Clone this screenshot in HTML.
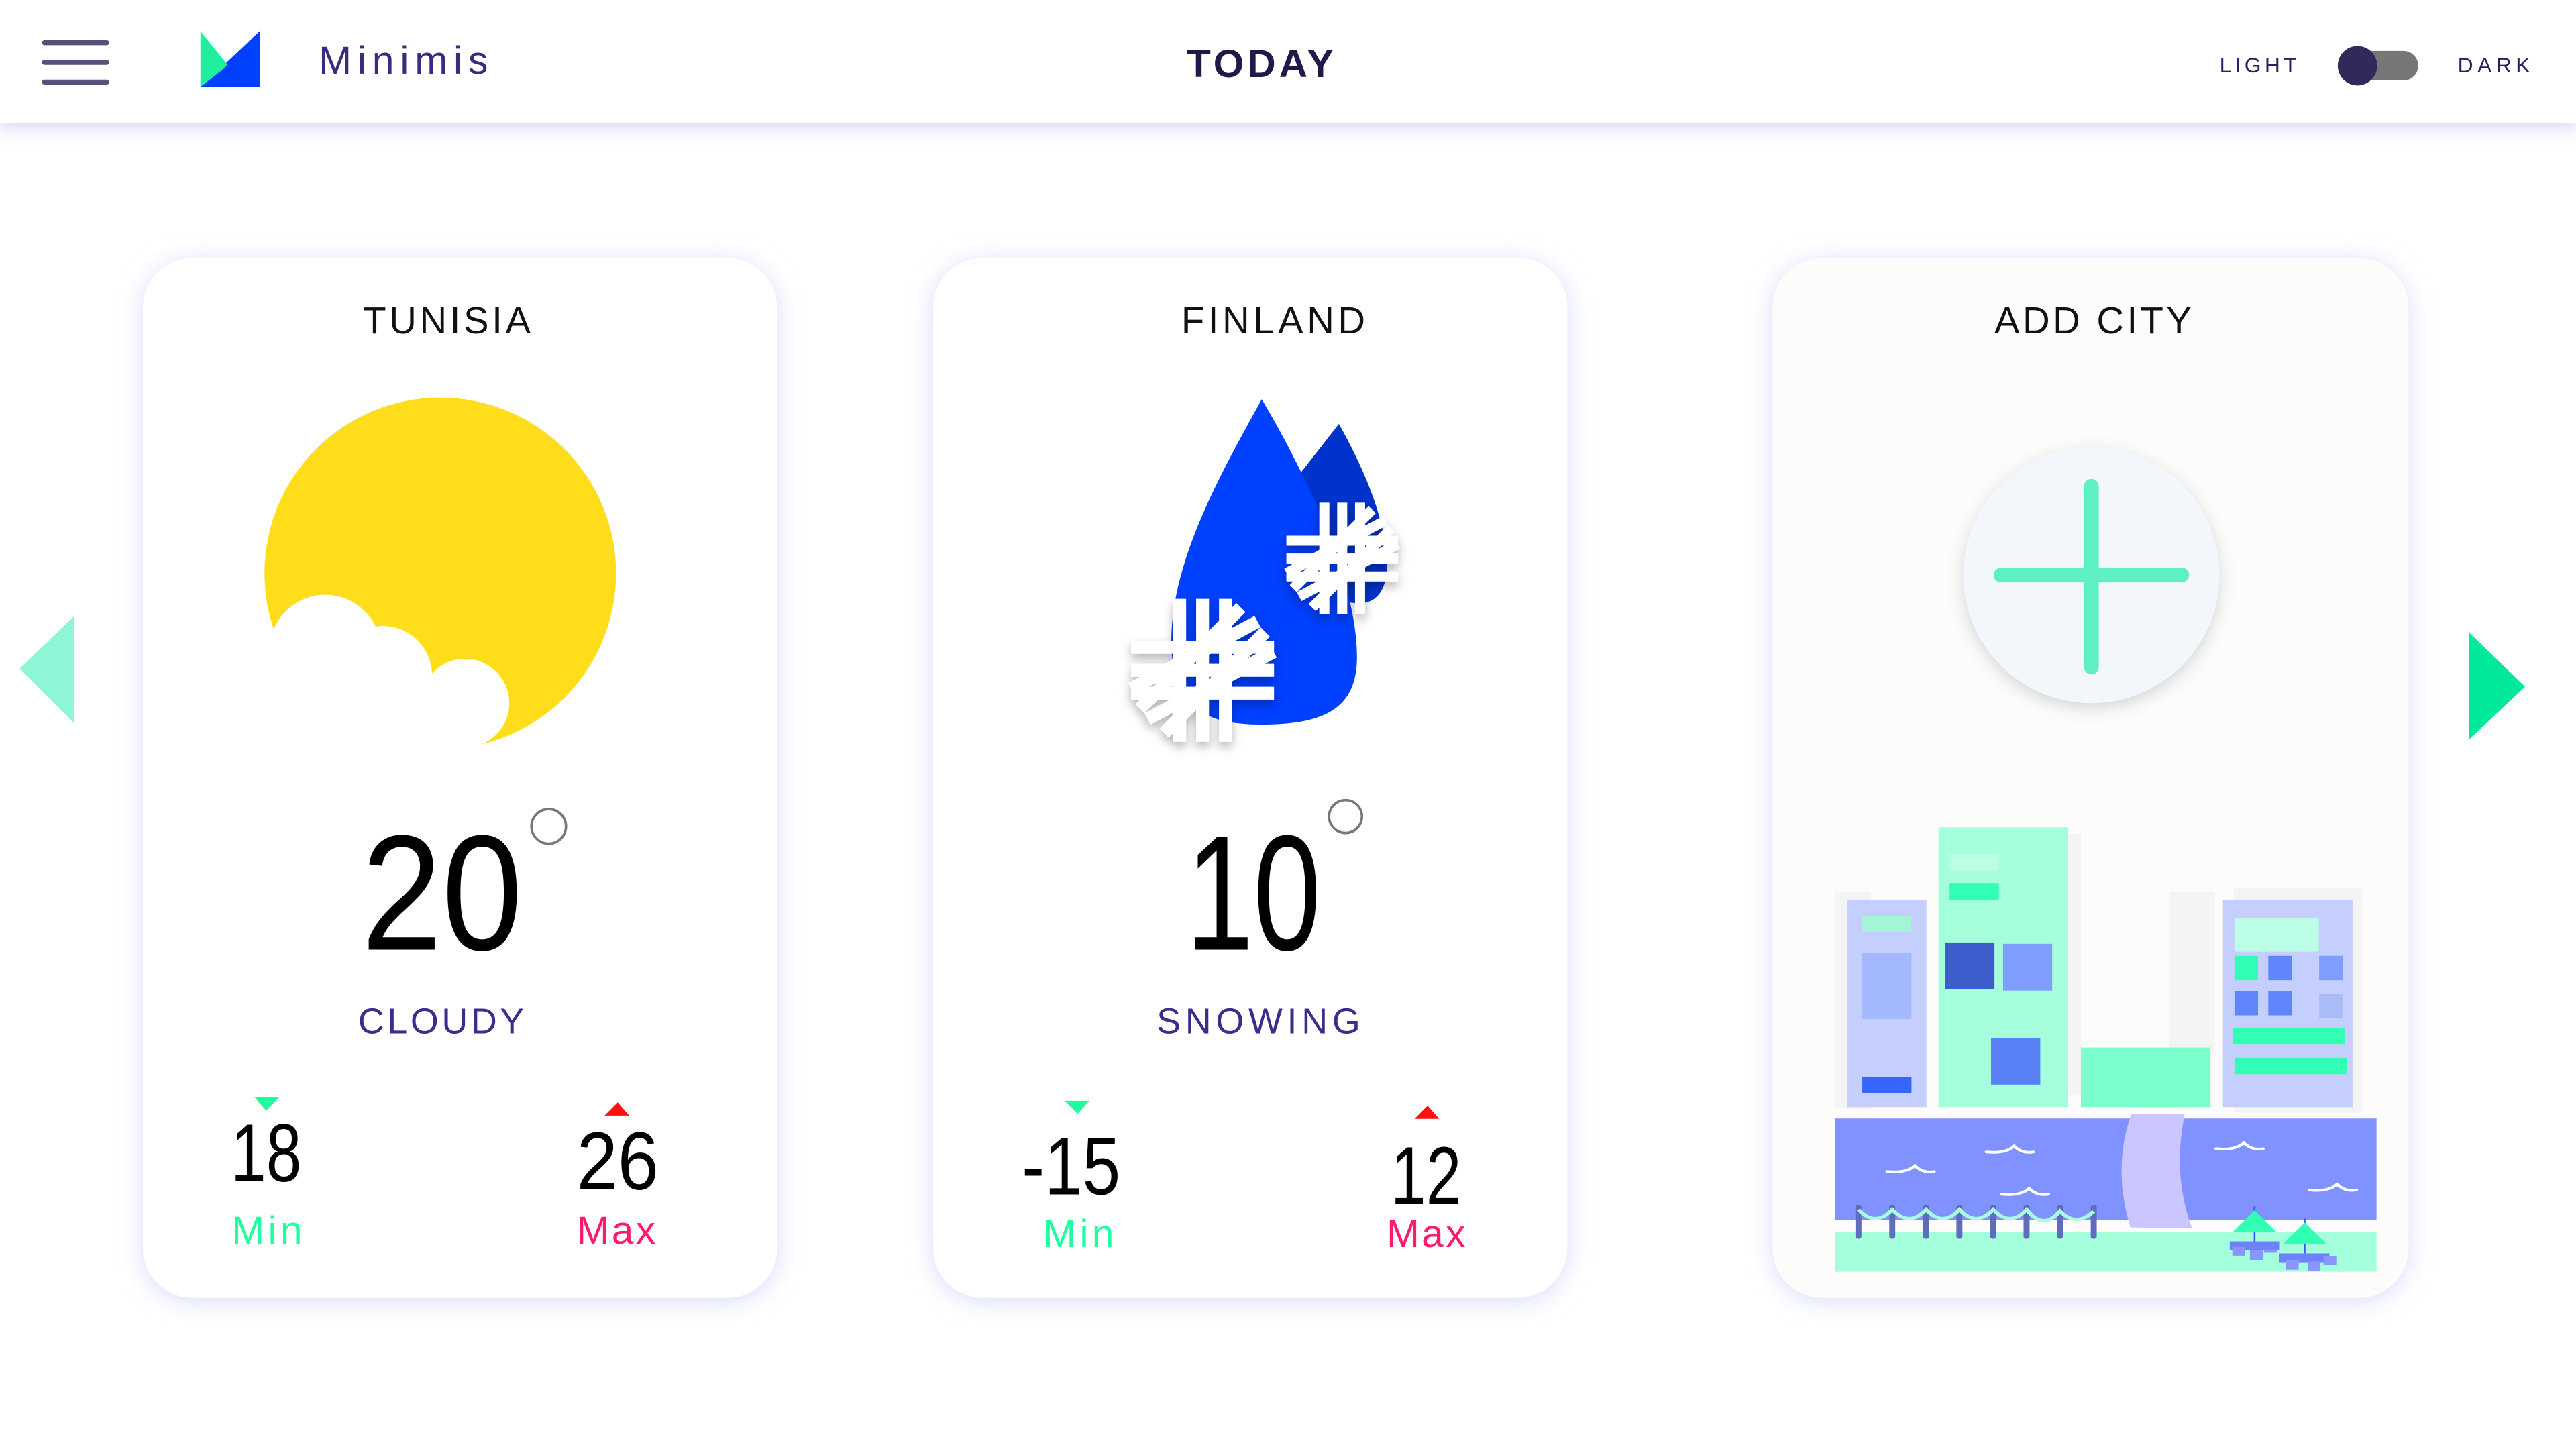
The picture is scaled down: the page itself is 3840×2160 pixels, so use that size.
<!DOCTYPE html>
<html><head><meta charset="utf-8"><style>
html,body{margin:0;padding:0;background:#fff;width:3840px;height:2160px;overflow:hidden}
svg{display:block}
text{font-family:"Liberation Sans",sans-serif}
</style></head><body>
<svg width="3840" height="2160" viewBox="0 0 1568 882" xmlns="http://www.w3.org/2000/svg">
<defs>
<filter id="hs" x="-5%" y="-50%" width="110%" height="200%"><feDropShadow dx="0" dy="3" stdDeviation="5" flood-color="#c8ccf5" flood-opacity="0.8"/></filter>
<filter id="cs" x="-20%" y="-20%" width="140%" height="140%"><feDropShadow dx="0" dy="2" stdDeviation="7" flood-color="#c9cdfa" flood-opacity="0.7"/></filter>
<filter id="ps" x="-30%" y="-30%" width="160%" height="160%"><feDropShadow dx="0" dy="3" stdDeviation="5" flood-color="#9aa" flood-opacity="0.45"/></filter>
<filter id="ss" x="-30%" y="-30%" width="160%" height="160%"><feDropShadow dx="0" dy="3" stdDeviation="3" flood-color="#000" flood-opacity="0.3"/></filter>
<g id="flake" stroke="#fff" stroke-width="9">
<line x1="-16" y1="-50" x2="-16" y2="50"/><line x1="0" y1="-50" x2="0" y2="50"/><line x1="16" y1="-50" x2="16" y2="50"/>
<line x1="-50" y1="-16" x2="50" y2="-16"/><line x1="-50" y1="0" x2="50" y2="0"/><line x1="-50" y1="16" x2="50" y2="16"/>
<g transform="rotate(45)"><line x1="-12" y1="-50" x2="-12" y2="50"/><line x1="12" y1="-50" x2="12" y2="50"/></g>
<g transform="rotate(-28)"><line x1="-50" y1="-12" x2="50" y2="-12"/><line x1="-50" y1="12" x2="50" y2="12"/></g>
</g>
</defs>

<rect x="0" y="0" width="1568" height="75" fill="#fff" filter="url(#hs)"/>
<g stroke="#5a4f7a" stroke-width="3" stroke-linecap="round"><line x1="27" y1="26" x2="65" y2="26"/><line x1="27" y1="38" x2="65" y2="38"/><line x1="27" y1="50" x2="65" y2="50"/></g>
<polygon points="158,19 158,53 122,53" fill="#0040ff"/>
<polygon points="122,19 139,40 122,53" fill="#1ef0a0"/>
<polygon points="158,19 158,53 122,53 136,42" fill="#0040ff"/>
<text x="194" y="45" font-size="24" fill="#3a2a80" textLength="103" lengthAdjust="spacing">Minimis</text>
<text x="768" y="47" font-size="24" font-weight="600" fill="#1f1a4a" letter-spacing="2" text-anchor="middle">TODAY</text>
<text x="1351" y="44" font-size="13" fill="#2a2060" textLength="47" lengthAdjust="spacing">LIGHT</text>
<rect x="1428" y="31" width="44" height="18" rx="9" fill="#777"/>
<circle cx="1435" cy="40" r="12" fill="#33285a"/>
<text x="1496" y="44" font-size="13" fill="#2a2060" textLength="44" lengthAdjust="spacing">DARK</text>

<polygon points="12,407 45,375 45,440" fill="#8ef5d6"/>
<polygon points="1503,385 1537,418 1503,450" fill="#00e89a"/>

<rect x="87" y="157" width="386" height="633" rx="30" fill="#fff" filter="url(#cs)"/>
<rect x="568" y="157" width="386" height="633" rx="30" fill="#fff" filter="url(#cs)"/>
<rect x="1079" y="157" width="387" height="633" rx="30" fill="#fdfcfb" filter="url(#cs)"/>

<text x="221" y="203" font-size="23" fill="#111" textLength="102" lengthAdjust="spacing">TUNISIA</text>
<circle cx="268" cy="349" r="107" fill="#ffdd1a"/>
<g fill="#fff"><circle cx="198" cy="396" r="34"/><circle cx="233" cy="411" r="30"/><circle cx="283" cy="428" r="27"/><rect x="150" y="415" width="133" height="50"/></g>
<text x="220" y="578" font-size="100" fill="#000" textLength="98" lengthAdjust="spacingAndGlyphs">20</text>
<circle cx="334" cy="503" r="10.5" fill="none" stroke="#777" stroke-width="1.5"/>
<text x="218" y="629" font-size="22" fill="#3c2c8c" textLength="101" lengthAdjust="spacing">CLOUDY</text>
<polygon points="155,668 170,668 162,676" fill="#1effa0"/>
<polygon points="368,679 383,679 376,671" fill="#ff1010"/>
<text x="162" y="719" font-size="50" fill="#000" text-anchor="middle" textLength="43" lengthAdjust="spacingAndGlyphs">18</text>
<text x="376" y="724" font-size="50" fill="#000" text-anchor="middle" textLength="50" lengthAdjust="spacingAndGlyphs">26</text>
<text x="141" y="757" font-size="24" fill="#1effa0" textLength="43" lengthAdjust="spacing">Min</text>
<text x="351" y="757" font-size="24" fill="#ff1a6e" textLength="48" lengthAdjust="spacing">Max</text>

<text x="719" y="203" font-size="23" fill="#111" textLength="112" lengthAdjust="spacing">FINLAND</text>
<path d="M815,258 C830,285 846,320 844,350 C840,372 825,370 800,360 L790,290 Z" fill="#0033cc"/>
<path d="M768,243 C790,280 826,350 826,400 C826,432 805,441 768,441 C735,441 713,432 713,390 C713,340 745,285 768,243 Z" fill="#0040ff"/>
<g filter="url(#ss)"><use href="#flake" transform="translate(732,408) scale(0.87)"/></g>
<g filter="url(#ss)"><use href="#flake" transform="translate(817,340) scale(0.68)"/></g>
<text x="722" y="578" font-size="100" fill="#000" textLength="82" lengthAdjust="spacingAndGlyphs">10</text>
<circle cx="819" cy="497" r="10" fill="none" stroke="#777" stroke-width="1.5"/>
<text x="704" y="629" font-size="22" fill="#3c2c8c" textLength="124" lengthAdjust="spacing">SNOWING</text>
<polygon points="648,670 663,670 656,678" fill="#1effa0"/>
<polygon points="861,681 876,681 869,673" fill="#ff1010"/>
<text x="652" y="727" font-size="50" fill="#000" text-anchor="middle" textLength="60" lengthAdjust="spacingAndGlyphs">-15</text>
<text x="868" y="733" font-size="50" fill="#000" text-anchor="middle" textLength="43" lengthAdjust="spacingAndGlyphs">12</text>
<text x="635" y="759" font-size="24" fill="#1effa0" textLength="43" lengthAdjust="spacing">Min</text>
<text x="844" y="759" font-size="24" fill="#ff1a6e" textLength="48" lengthAdjust="spacing">Max</text>

<text x="1214" y="203" font-size="23" fill="#111" textLength="120" lengthAdjust="spacing">ADD CITY</text>
<circle cx="1273" cy="350" r="78" fill="#f3f6fb" filter="url(#ps)"/>
<g stroke="#5ef0c0" stroke-width="9" stroke-linecap="round"><line x1="1218" y1="350" x2="1328" y2="350"/><line x1="1273" y1="296" x2="1273" y2="406"/></g>

<g transform="translate(1061.7,481.8) scale(0.2604,0.198)">
<g fill="#f4f4f4"><rect x="212" y="307" width="84" height="668"/><rect x="757" y="130" width="30" height="805"/><rect x="993" y="307" width="107" height="490"/><rect x="1144" y="296" width="303" height="691"/></g>
<rect x="240" y="332" width="186" height="638" fill="#c5cffd"/>
<rect x="276" y="382" width="115" height="50" fill="#a4f5d6"/><rect x="276" y="497" width="115" height="202" fill="#a3b8ff"/><rect x="276" y="877" width="115" height="50" fill="#3565fb"/>
<rect x="454" y="110" width="303" height="860" fill="#a5ffdc"/>
<rect x="480" y="192" width="115" height="50" fill="#bdfde6"/><rect x="480" y="283" width="115" height="50" fill="#30ffb4"/>
<rect x="470" y="464" width="115" height="144" fill="#3c5ecc"/><rect x="605" y="468" width="115" height="144" fill="#7f9cff"/><rect x="577" y="757" width="115" height="144" fill="#5a80f5"/>
<rect x="787" y="787" width="303" height="183" fill="#7bffcc"/>
<rect x="1119" y="332" width="303" height="638" fill="#c5cffd"/>
<rect x="1146" y="390" width="197" height="102" fill="#bcfde5"/>
<rect x="1146" y="505" width="55" height="75" fill="#30ffb4"/><rect x="1225" y="505" width="55" height="75" fill="#6185fb"/><rect x="1344" y="505" width="55" height="75" fill="#7f9cff"/>
<rect x="1146" y="613" width="55" height="75" fill="#6185fb"/><rect x="1225" y="613" width="55" height="75" fill="#6185fb"/><rect x="1344" y="621" width="55" height="75" fill="#aabcf8"/>
<rect x="1143" y="728" width="262" height="50" fill="#30ffb4"/><rect x="1146" y="819" width="262" height="50" fill="#30ffb4"/>
<rect x="212" y="1005" width="1266" height="313" fill="#8092ff"/>
<rect x="212" y="1353" width="1266" height="123" fill="#a3ffdc"/>
<path d="M905,990 L1030,990 Q1000,1180 1047,1343 L903,1340 Q860,1160 905,990 Z" fill="#cbc6ff"/>
<g fill="none" stroke="#fff" stroke-width="8" stroke-linecap="round">
<path d="M334,1168 q45,6 65,-18 q18,24 45,18"/><path d="M566,1108 q45,6 65,-18 q18,24 45,18"/><path d="M601,1238 q45,6 65,-18 q18,24 45,18"/><path d="M1103,1098 q45,6 65,-18 q18,24 45,18"/><path d="M1321,1225 q45,6 65,-18 q18,24 45,18"/>
</g>
<g stroke="#5f6bbb" stroke-width="14" stroke-linecap="round"><line x1="267" y1="1278" x2="267" y2="1368"/><line x1="346" y1="1278" x2="346" y2="1368"/><line x1="425" y1="1278" x2="425" y2="1368"/><line x1="503" y1="1278" x2="503" y2="1368"/><line x1="582" y1="1278" x2="582" y2="1368"/><line x1="660" y1="1278" x2="660" y2="1368"/><line x1="738" y1="1278" x2="738" y2="1368"/><line x1="817" y1="1278" x2="817" y2="1368"/></g>
<path d="M267,1285 Q306,1340 346,1285 Q385,1340 425,1285 Q464,1340 503,1285 Q542,1340 582,1285 Q621,1340 660,1285 Q699,1350 738,1290 Q777,1340 817,1290" fill="none" stroke="#a5ffdc" stroke-width="10"/>
<line x1="1193" y1="1275" x2="1193" y2="1385" stroke="#3a54ff" stroke-width="4"/>
<polygon points="1143,1353 1193,1287 1243,1353" fill="#30ffb4"/>
<rect x="1135" y="1383" width="117" height="27" fill="#6e82ff"/>
<g fill="#8a96ff"><rect x="1141" y="1400" width="30" height="27"/><rect x="1182" y="1410" width="30" height="30"/><rect x="1215" y="1408" width="30" height="10"/></g>
<line x1="1310" y1="1312" x2="1310" y2="1420" stroke="#3a54ff" stroke-width="4"/>
<polygon points="1260,1390 1310,1325 1360,1390" fill="#30ffb4"/>
<rect x="1251" y="1420" width="117" height="27" fill="#6e82ff"/>
<g fill="#8a96ff"><rect x="1266" y="1440" width="30" height="30"/><rect x="1317" y="1445" width="30" height="28"/><rect x="1354" y="1428" width="30" height="28"/></g>
</g>
</svg>
</body></html>
